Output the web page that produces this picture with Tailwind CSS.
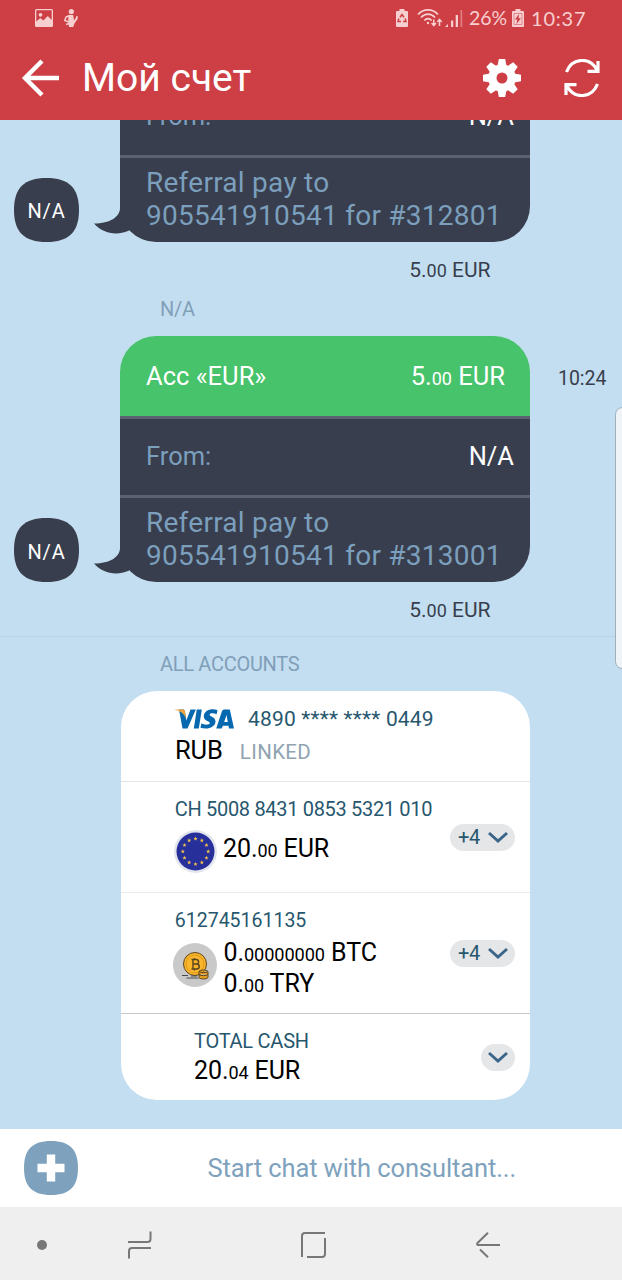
<!DOCTYPE html>
<html lang="ru">
<head>
    <meta charset="UTF-8">
    <title>Мой счет</title>
    <script src="https://cdn.jsdelivr.net/npm/@tailwindcss/browser@4"></script>
</head>
<body class="relative flex h-[1280px] w-[622px] flex-col overflow-hidden bg-[#c3def0] font-[Roboto,sans-serif]">

    <!-- Header -->
    <header class="h-[120px] shrink-0 bg-[#cd3f44] text-white">
        <div class="flex h-9 items-center pl-[35px] pr-[36px] text-[#f8cfd0]">
            <svg class="h-[18px] w-[18px]" viewBox="0 0 18 18" fill="currentColor">
                <path fill-rule="evenodd" d="M1.5 0h15A1.5 1.5 0 0 1 18 1.500v15a1.500 1.500 0 0 1-1.500 1.500h-15A1.500 1.500 0 0 1 0 16.500v-15A1.500 1.500 0 0 1 1.500 0zM1.300 1.300v11.200l4-3.500 3 2.500 4.500-4.500 3.900 4V1.300z"/>
                <circle cx="5.500" cy="5.800" r="1.900"/>
            </svg>
            <svg class="ml-[11px] h-[18px] w-[14px]" viewBox="0 0 14 18" fill="currentColor">
                <circle cx="7.300" cy="2.600" r="2.600"/>
                <path d="M4.200 6h5l.8 5.500 2-3 .3-1.500 1.700.5-.6 2.800-3 4.300L9.200 18H5l-.6-3.500z"/>
                <path fill="none" stroke="currentColor" stroke-width="1.500" d="M5.500 6.500 2 8l-1.200 3.500 4 1.500M2 15.500l3-1"/>
            </svg>
            <div class="flex-1"></div>
            <svg class="h-[18px] w-3" viewBox="0 0 12 18">
                <path fill="currentColor" d="M3.500 0h5v2H11a1 1 0 0 1 1 1v14a1 1 0 0 1-1 1H1a1 1 0 0 1-1-1V3a1 1 0 0 1 1-1h2.500z"/>
                <path fill="none" stroke="#cd3f44" stroke-width="1.500" d="M4 8.200 6 5.500l2 2.700M2.800 9.500 2 12.500h3M9.200 9.500l.8 3H7"/>
            </svg>
            <svg class="ml-[9px] h-[18px] w-[26px]" viewBox="0 0 26 18" fill="none" stroke="currentColor" stroke-width="1.700">
                <path d="M1 5.500C6.500-.6 15.500-.6 21 5.500M4 8.500c4-4.400 10-4.400 14 0M7.300 11.500c2.200-2.400 5.200-2.400 7.400 0"/>
                <circle cx="11" cy="14" r="1.200" fill="currentColor" stroke="none"/>
                <path stroke-width="1.500" d="M16.800 10.500v6M14.600 14l2.200 2.500L19 14M22.500 17v-6.500M20.300 13l2.200-2.500 2.200 2.500"/>
            </svg>
            <svg class="ml-[1px] h-[18px] w-[19px]" viewBox="0 0 19 18" fill="currentColor">
                <path d="M4 15v3H1zM7 11.500h2.200V18H7zM11.700 6H14v12h-2.300z"/>
                <path opacity=".45" d="M16.500 1h1.700v17h-1.700z"/>
            </svg>
            <span class="ml-[6px] w-[38px] font-[Lato,sans-serif] text-[19.500px] leading-[26px]">26%</span>
            <svg class="ml-[5px] h-[18px] w-3" viewBox="0 0 12 18">
                <path fill="currentColor" d="M3.500 0h5v2H11a1 1 0 0 1 1 1v14a1 1 0 0 1-1 1H1a1 1 0 0 1-1-1V3a1 1 0 0 1 1-1h2.500z"/>
                <path fill="none" stroke="#cd3f44" stroke-opacity=".5" stroke-width="1" d="M2 4.500h8v11H2z"/>
                <path fill="#cd3f44" d="M7 5 3 10.500h2.300L4.500 15 9 9.200H6.500z"/>
            </svg>
            <span class="ml-[7px] w-[55px] font-[Lato,sans-serif] text-[20px] leading-[26px] tracking-[0.8px]">10:37</span>
        </div>
        <div class="flex h-[84px] items-center pl-[21px] pr-[22px]">
            <svg class="h-[38px] w-[38px]" viewBox="0 0 38 38" fill="none" stroke="#fff" stroke-width="4.400">
                <path d="M38 19H4M21 2 4 19l17 17"/>
            </svg>
            <h1 class="ml-[23px] flex-1 text-[39px] leading-[48px]">Мой счет</h1>
            <svg class="h-[38px] w-[38px]" viewBox="-19 -19 38 38">
                <g fill="#fff">
                    <circle r="13.800"/>
                    <path id="tooth" d="M-3.200-19h6.400l1.300 7v24l-1.300 7h-6.400l-1.300-7v-24z"/>
                    <use href="#tooth" transform="rotate(45)"/>
                    <use href="#tooth" transform="rotate(90)"/>
                    <use href="#tooth" transform="rotate(135)"/>
                </g>
                <circle r="5.500" fill="#cd3f44"/>
            </svg>
            <svg class="ml-[43px] h-[38px] w-[36px]" viewBox="0 0 36 38" fill="none" stroke="#fff" stroke-width="3.200">
                <path d="M2.500 13C8-1.500 26-2.500 33 11M34 2v10.300H23.500M33.500 25C28 39.500 10 40.500 3 27M2 36V25.700h10.500"/>
            </svg>
        </div>
    </header>

    <!-- Chat -->
    <main class="h-[1009px] shrink-0 overflow-hidden">
        <div class="-mt-[164px]">
            <div class="h-10 pl-[160px] text-[20px] leading-[27px] tracking-[-0.2px] text-[#819fb9]">N/A</div>
            <div class="flex h-[246px]">
                <div class="flex w-[120px] items-end justify-between pl-[14px]">
                    <div class="relative h-[64px] w-[65px]">
                        <svg class="h-full w-full" viewBox="0 0 64 64" preserveAspectRatio="none"><path fill="#383e4d" d="M0 32C0 10 10 0 32 0s32 10 32 32-10 32-32 32S0 54 0 32z"/></svg>
                        <span class="absolute inset-0 text-center text-[20px] leading-[67px] tracking-[0.8px] text-white">N/A</span>
                    </div>
                    <svg class="-mr-[10px] mb-[8px] h-[34px] w-[36px]" viewBox="0 0 36 34"><path fill="#383e4d" d="M26 0v8c0 9-10 15.500-26 15.500C8 33 22 36 34 31l2-1V0z"/></svg>
                </div>
                <div class="w-[410px] overflow-hidden rounded-[36px] text-[25.500px]">
                    <div class="flex h-20 items-center justify-between bg-[#47c36b] pl-[26px] pr-[25px] text-white">
                        <span>Acc «EUR»</span><span>5.<span class="text-[18px]">00</span> EUR</span>
                    </div>
                    <div class="flex h-[79px] items-center justify-between border-t-[3px] border-[#5b616e] bg-[#383e4d] pb-[2px] pl-[26px] pr-[16px]">
                        <span class="text-[#7b9fbc]">From:</span><span class="text-white">N/A</span>
                    </div>
                    <div class="h-[87px] border-t-[3px] border-[#5b616e] bg-[#383e4d] pl-[26px] pt-[8px] text-[28px] leading-[33px] tracking-[0.260px] text-[#7b9fbc]">Referral pay to<br>905541910541 for #312801</div>
                </div>
            </div>
            <div class="h-[54px] pr-[131.500px] text-right text-[21px] leading-[57px] text-[#383e4d]">5.<span class="text-[18px]">00</span> EUR</div>
        </div>

        <div>
            <div class="h-10 pl-[160px] text-[20px] leading-[27px] tracking-[-0.2px] text-[#819fb9]">N/A</div>
            <div class="flex h-[246px]">
                <div class="flex w-[120px] items-end justify-between pl-[14px]">
                    <div class="relative h-[64px] w-[65px]">
                        <svg class="h-full w-full" viewBox="0 0 64 64" preserveAspectRatio="none"><path fill="#383e4d" d="M0 32C0 10 10 0 32 0s32 10 32 32-10 32-32 32S0 54 0 32z"/></svg>
                        <span class="absolute inset-0 text-center text-[20px] leading-[68px] tracking-[0.8px] text-white">N/A</span>
                    </div>
                    <svg class="-mr-[10px] mb-[8px] h-[34px] w-[36px]" viewBox="0 0 36 34"><path fill="#383e4d" d="M26 0v8c0 9-10 15.500-26 15.500C8 33 22 36 34 31l2-1V0z"/></svg>
                </div>
                <div class="w-[410px] overflow-hidden rounded-[36px] text-[25.500px]">
                    <div class="flex h-20 items-center justify-between bg-[#47c36b] pl-[26px] pr-[25px] text-white">
                        <span>Acc «EUR»</span><span>5.<span class="text-[18px]">00</span> EUR</span>
                    </div>
                    <div class="flex h-[79px] items-center justify-between border-t-[3px] border-[#5b616e] bg-[#383e4d] pb-[2px] pl-[26px] pr-[16px]">
                        <span class="text-[#7b9fbc]">From:</span><span class="text-white">N/A</span>
                    </div>
                    <div class="h-[87px] border-t-[3px] border-[#5b616e] bg-[#383e4d] pl-[26px] pt-[8px] text-[28px] leading-[33px] tracking-[0.260px] text-[#7b9fbc]">Referral pay to<br>905541910541 for #313001</div>
                </div>
                <div class="w-[92px] pr-[15.500px] text-right text-[19.500px] leading-[86px] text-[#383e4d]">10:24</div>
            </div>
            <div class="h-[54px] pr-[131.500px] text-right text-[21px] leading-[57px] text-[#383e4d]">5.<span class="text-[18px]">00</span> EUR</div>
        </div>

        <!-- Accounts -->
        <section class="border-t border-[#b8d3e5]">
            <h2 class="pl-[160px] text-[20px] leading-[54px] tracking-[-0.3px] text-[#819fb9]">ALL ACCOUNTS</h2>
            <div class="ml-[121px] h-[409px] w-[409px] rounded-[36px] bg-white text-[25px] tracking-[-0.1px] text-black">
                <div class="h-[91px] border-b border-[#e3e6e8] pl-[53px] pt-3">
                    <div class="flex h-8 items-center">
                        <svg class="h-[20px] w-[61px]" viewBox="0 0 61 20" role="img" aria-label="VISA">
                            <g fill="#0668ae">
                                <path d="M5 .5h3.500c1.500 0 2.200.6 2.500 2l1.300 9L16.500.5h5.300L13.500 19.500h-5z"/>
                                <path d="M22.800.5h5l-3 19h-5z"/>
                                <path d="M43.500 1.200l-.8 4c-3-1.200-7-1.200-7 .5 0 2 5.800 2.100 5.800 6.800 0 5.500-7.500 8.500-15 6.300l.8-4.200c3.500 1.500 8.500 1.400 8.500-.6s-6-2.100-6-6.600C29.800 1.500 37.500-1.200 43.500 1.200z"/>
                                <path fill-rule="evenodd" d="M50 .5h5.800l4.200 19h-5l-.5-2.800h-5.600l-1.200 2.800h-5.500L48 2Q48.600.5 50 .5zM52.500 6l-2.300 7h3.600z"/>
                            </g>
                            <path fill="#f0a23c" d="M0 .5h8.500c1.500 0 2.200.6 2.500 2l1 7C10 4.500 6 1.500 0 .5z"/>
                        </svg>
                        <span class="ml-[13px] pt-px text-[21px] tracking-[0.180px] text-[#27576e]">4890 **** **** 0449</span>
                    </div>
                    <div class="flex h-8 items-baseline">
                        <span class="ml-px text-[25.500px] leading-[31px]">RUB</span><span class="ml-[17px] text-[20.500px] tracking-[0.350px] text-[#8fa3b1]">LINKED</span>
                    </div>
                </div>

                <div class="flex h-[111px] items-center border-b border-[#e8eaec] pr-[15px]">
                    <div class="h-full flex-1 pl-[53px] pt-[13px]">
                        <div class="pl-[0.800px] text-[20px] leading-7 tracking-[-0.320px] text-[#27576e]">CH 5008 8431 0853 5321 010</div>
                        <div class="flex h-[57px] items-center">
                            <svg class="h-[43px] w-[43px]" viewBox="-21.500 -21.500 43 43">
                                <circle r="21.500" fill="#e2e5ee"/>
                                <circle r="19" fill="#27309a"/>
                                <g id="stars" fill="#f2c14e"></g>
                            </svg>
                            <span class="-mt-[5px] ml-[6px]">20.<span class="text-[18px]">00</span> EUR</span>
                        </div>
                    </div>
                    <div class="flex h-[27px] w-[65px] items-center justify-between rounded-full bg-[#e5e6e7] pl-[8px] pr-[7px]">
                        <span class="text-[20px] tracking-[-0.3px] text-[#27576e]">+4</span>
                        <svg class="h-3 w-5" viewBox="0 0 20 12" fill="none" stroke="#3b668a" stroke-width="3"><path d="m1 2 9 8 9-8"/></svg>
                    </div>
                </div>

                <div class="flex h-[121px] items-center border-b border-[#c6cacc] pr-[15px]">
                    <div class="h-full flex-1 pl-[52px] pt-[13px]">
                        <div class="pl-[1.800px] text-[19.500px] leading-[29px] tracking-[0px] text-[#27576e]">612745161135</div>
                        <div class="-mt-px flex h-[62px] items-center">
                            <svg class="h-[44px] w-[44px]" viewBox="0 0 44 44">
                                <circle cx="22" cy="22" r="22" fill="#c9c9c9"/>
                                <circle cx="22" cy="21" r="11.500" fill="#f9b52c" stroke="#5a4520"/>
                                <circle cx="22" cy="21" r="9" fill="none" stroke="#e09a1c"/>
                                <path fill="none" stroke="#5a4520" stroke-width="1.400" d="M18.500 16.500h4.500c3.500 0 3.500 4.500 0 4.500h-3 3.500c3.700 0 3.700 5 0 5h-5M20 16.500V26M21.500 15v1.500M21.500 26v1.500"/>
                                <path fill="#e59c22" stroke="#5a4520" d="M26 28.500c1.500-2 7.500-2 9 0v6c-1.500 2-7.500 2-9 0zM26 31.500c2 1.500 7 1.500 9 0M26 28.500c2 1.500 7 1.500 9 0"/>
                                <path stroke="#4a4a4a" d="M9 32.500h6M18 33h6M13.500 35h12"/>
                            </svg>
                            <div class="ml-[6.500px] pt-[6px] leading-[31px]">
                                <div class="h-[31px]">0.<span class="text-[18.200px]">00000000</span> BTC</div>
                                <div class="h-[31px]">0.<span class="text-[18px]">00</span> TRY</div>
                            </div>
                        </div>
                    </div>
                    <div class="flex h-[27px] w-[65px] items-center justify-between rounded-full bg-[#e5e6e7] pl-[8px] pr-[7px]">
                        <span class="text-[20px] tracking-[-0.3px] text-[#27576e]">+4</span>
                        <svg class="h-3 w-5" viewBox="0 0 20 12" fill="none" stroke="#3b668a" stroke-width="3"><path d="m1 2 9 8 9-8"/></svg>
                    </div>
                </div>

                <div class="flex h-[86px] items-center pr-[15px]">
                    <div class="h-full flex-1 pl-[73px] pt-[13px]">
                        <div class="text-[20px] leading-[29px] tracking-[-0.250px] text-[#27576e]">TOTAL CASH</div>
                        <div class="leading-[30px]">20.<span class="text-[18px]">04</span> EUR</div>
                    </div>
                    <div class="flex h-[27px] w-[34px] items-center justify-end rounded-full bg-[#e5e6e7] pr-[7px]">
                        <svg class="h-3 w-5" viewBox="0 0 20 12" fill="none" stroke="#3b668a" stroke-width="3"><path d="m1 2 9 8 9-8"/></svg>
                    </div>
                </div>
            </div>
        </section>
    </main>

    <!-- Message input -->
    <div class="flex h-[78px] shrink-0 items-center bg-white pl-6">
        <svg class="h-[54px] w-[54px]" viewBox="0 0 64 64">
            <path fill="#7ea2bd" d="M0 32C0 10 10 0 32 0s32 10 32 32-10 32-32 32S0 54 0 32z"/>
            <path fill="#fff" d="M27 16h10v11h11v10H37v11H27V37H16V27h11z"/>
        </svg>
        <span class="ml-[129.500px] text-[25.500px] tracking-[-0.1px] text-[#7ea2bd]">Start chat with consultant...</span>
    </div>

    <!-- System navigation -->
    <nav class="flex h-[73px] shrink-0 items-center bg-[#efefef] pl-[37px] pt-[3px]">
        <div class="h-[10px] w-[10px] rounded-full bg-[#777]"></div>
        <svg class="ml-[81px] h-[28px] w-[24px]" viewBox="0 0 24 28" fill="none" stroke="#777" stroke-width="2">
            <path d="M0 11h19.500a3 3 0 0 0 3-3V.5M23 17H4a3 3 0 0 0-3 3v7.500"/>
        </svg>
        <svg class="ml-[149px] h-[26px] w-[25px]" viewBox="0 0 25 26" fill="none" stroke="#777" stroke-width="2">
            <path d="M1 25V4a3 3 0 0 1 3-3h20M24 6v16a3 3 0 0 1-3 3H6"/>
        </svg>
        <svg class="ml-[150px] h-[26px] w-[24px]" viewBox="0 0 24 26" fill="none" stroke="#777" stroke-width="2">
            <path d="M24 13H2q-1.500-.500-.5-2L12 .8M4 17.500l8 7.800"/>
        </svg>
    </nav>

    <!-- Edge panel handle -->
    <div class="absolute -right-2 top-[407px] h-[262px] w-[15px] rounded-lg border border-[#9fb0bd] bg-[#eff4f9]"></div>

    <script>
        // twelve stars in a circle
        const stars = document.getElementById('stars');
        const star = 'M0-2.200.6-.7 2.100-.7.900.3 1.300 1.800 0 .900-1.300 1.800-.9.300-2.100-.7-.6-.7z';
        for (let i = 0; i < 12; i++) {
            const a = i * Math.PI / 6;
            const p = document.createElementNS('http://www.w3.org/2000/svg', 'path');
            p.setAttribute('d', star);
            p.setAttribute('transform', `translate(${12.7 * Math.sin(a)} ${-12.7 * Math.cos(a)})`);
            stars.appendChild(p);
        }
    </script>
</body>
</html>
